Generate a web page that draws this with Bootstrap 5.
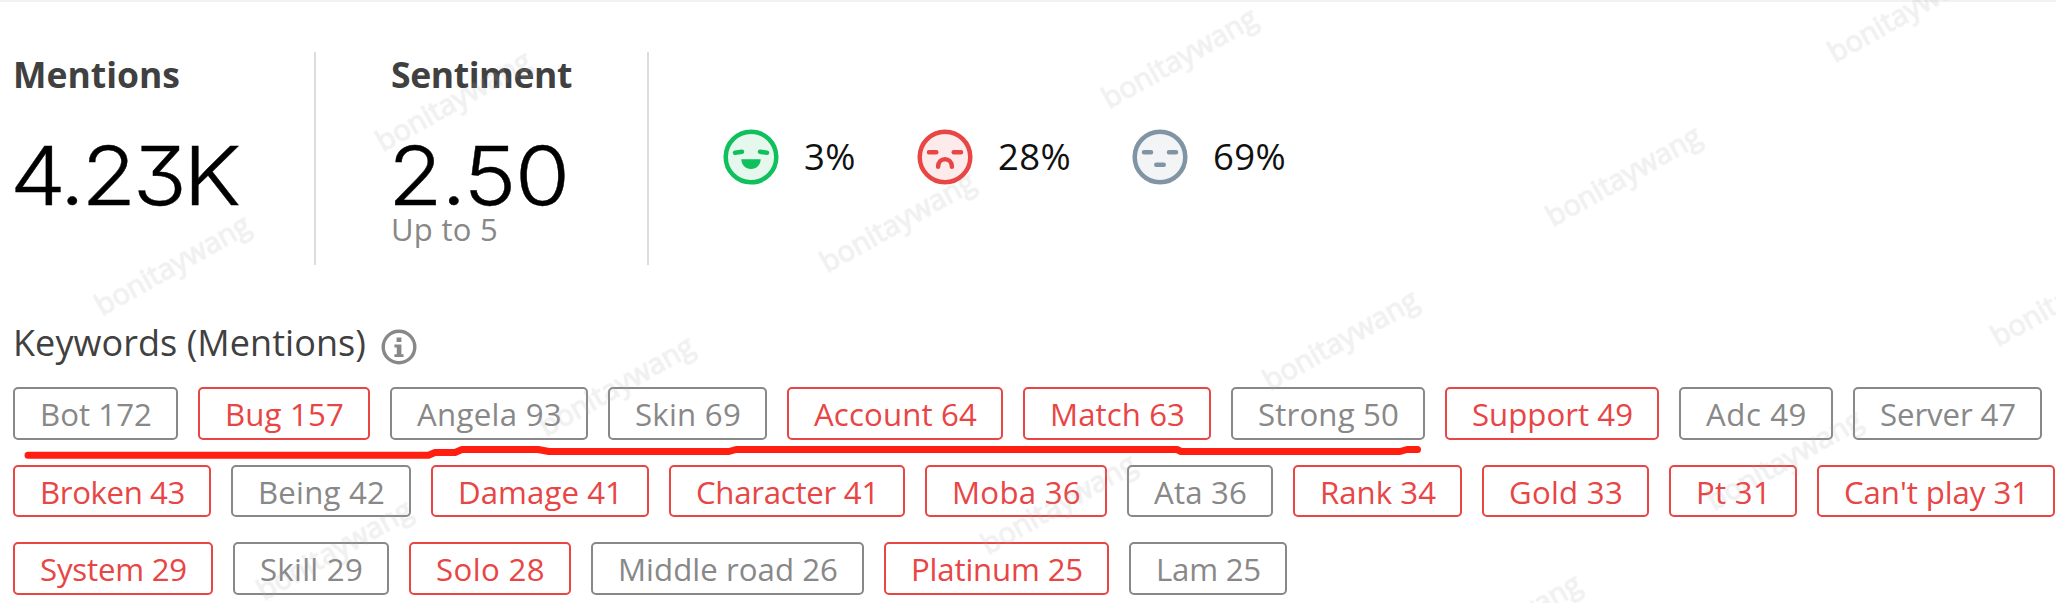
<!DOCTYPE html>
<html lang="en">
<head>
<meta charset="utf-8">
<title>Keyword mentions</title>
<link rel="stylesheet" href="https://cdn.jsdelivr.net/npm/bootstrap@5.3.0/dist/css/bootstrap.min.css">
<style>
body{font-family:"Open Sans","Noto Sans",sans-serif;color:#404040;background:#fff;height:603px;overflow:hidden;line-height:1}
.page{border-top:2px solid #f2f2f2;padding-left:13px;height:603px}
.stats{padding-top:50px;height:263px}
.stat{height:213px;border-right:2px solid #dcdcdc;color:#404040}
.stat-a{width:303px}
.stat-b{width:333px;padding-left:75px}
.stat h2{font-size:35.5px;line-height:44px;margin:0;font-weight:700;white-space:nowrap}
.num{font-family:Inter,Lato,sans-serif;font-weight:300;font-size:81px;line-height:80px;color:#000;white-space:nowrap;font-feature-settings:"cv09" 1;margin-top:40px;margin-left:-3px}
.num span{display:inline-block;transform:scaleX(1.1);transform-origin:0 50%;-webkit-text-stroke:.4px #000}
.upto{font-size:31px;line-height:36px;color:#888;margin-top:-5px;white-space:nowrap}
.faces{padding-left:74px;height:213px}
.face{width:56px;height:56px;flex:none}
.pct{font-size:36.5px;line-height:54px;color:#111;margin-left:25px;white-space:nowrap}
.mood{padding-top:77px}
.kw{font-size:36px;line-height:48px;white-space:nowrap;margin:0;font-weight:400}
.kwhead{height:48px;margin-top:54px}
.tags{margin-top:20px}
.tagrow{gap:20px;margin-bottom:25px;height:53px}
.tagrow:nth-child(2){height:52px}
.tag{border:2px solid #888;border-radius:5px;color:#888;font-size:31.2px;line-height:50px;height:100%;padding-left:25px;white-space:nowrap;flex:none}
.tag.neg{border-color:#e84545;color:#e84545}
.overlay{left:0;top:0;pointer-events:none}
.wm{opacity:.17}
.wm text{font-family:"Open Sans",sans-serif;font-size:29px;fill:#aaa;stroke:#aaa;stroke-width:1.2;text-anchor:middle}
</style>
</head>
<body>
<main class="page">
  <section class="stats d-flex">
    <div class="stat stat-a"><h2><span data-w="167">Mentions</span></h2>
      <div class="num"><span data-w="207">4.23K</span></div></div>
    <div class="stat stat-b"><h2><span data-w="181">Sentiment</span></h2>
      <div class="num"><span data-w="164">2.50</span></div>
      <div class="upto"><span data-w="107">Up to 5</span></div></div>
    <div class="faces d-flex">
      <div class="mood d-flex" style="width:194px">
        <svg class="face" viewBox="-28 -28 56 56"><circle r="25.3" fill="#e6f7ed" stroke="#0fc05c" stroke-width="4.5"/><path d="M-16-4.2L-9-5.2M9-5.2L16-4.2" stroke="#0fc05c" stroke-width="4.5" stroke-linecap="round"/><path d="M-9.7 2.3H9.7C9.5 8 5.5 12 0 12S-9.5 8-9.7 2.3Z" fill="#0fc05c"/></svg>
        <div class="pct"><span data-w="52">3%</span></div>
      </div>
      <div class="mood d-flex" style="width:215px">
        <svg class="face" viewBox="-28 -28 56 56"><circle r="25.3" fill="#fdebeb" stroke="#e84545" stroke-width="4.5"/><path d="M-16-4.7H-8.7M8.7-4.7H16M-6.9 9.7C-6.9-.4 6.9-.4 6.9 9.7" fill="none" stroke="#e84545" stroke-width="4.5" stroke-linecap="round"/></svg>
        <div class="pct"><span data-w="73">28%</span></div>
      </div>
      <div class="mood d-flex">
        <svg class="face" viewBox="-28 -28 56 56"><circle r="25.3" fill="#f2f4f6" stroke="#8094a3" stroke-width="4.5"/><path d="M-16-4.7H-9M9-4.7H16M-3.7 7.7H3.7" stroke="#8094a3" stroke-width="4.5" stroke-linecap="round"/></svg>
        <div class="pct"><span data-w="73">69%</span></div>
      </div>
    </div>
  </section>
  <div class="kwhead d-flex align-items-center">
    <h3 class="kw" style="width:368px"><span data-w="353">Keywords (Mentions)</span></h3>
    <svg width="36" height="36" viewBox="-18 -18 36 36" style="margin-top:7px"><circle r="15.8" fill="none" stroke="#888" stroke-width="3.4"/><path d="M-2.4-9.6H2.4V-5H-2.4ZM-4.6-2.4H2.4V7.2H4.6V10H-4.6V7.2H-2.2V.4H-4.6Z" fill="#888"/></svg>
  </div>
  <section class="tags" id="tags"></section>
</main>

<svg class="overlay position-absolute" width="2056" height="603">
  <path d="M28 455.3H428.5L435 452.5H455L462 449.5H538L549 451.5H729L736 449.5H1177L1181 451.5H1400L1407 449.5H1417.5" fill="none" stroke="#ff1e10" stroke-width="7" stroke-linecap="round" stroke-linejoin="round"/>
  <g class="wm" id="wm"></g>
</svg>

<script src="https://cdn.jsdelivr.net/npm/bootstrap@5.3.0/dist/js/bootstrap.bundle.min.js"></script>
<script>
// label, box width, 1 = negative keyword
const rows=[
 [["Bot 172",165,0],["Bug 157",172,1],["Angela 93",198,0],["Skin 69",159,0],["Account 64",216,1],["Match 63",188,1],["Strong 50",194,0],["Support 49",214,1],["Adc 49",154,0],["Server 47",189,0]],
 [["Broken 43",198,1],["Being 42",180,0],["Damage 41",218,1],["Character 41",236,1],["Moba 36",182,1],["Ata 36",146,0],["Rank 34",169,1],["Gold 33",167,1],["Pt 31",128,1],["Can't play 31",238,1]],
 [["System 29",200,1],["Skill 29",156,0],["Solo 28",162,1],["Middle road 26",273,0],["Platinum 25",225,1],["Lam 25",158,0]]];
document.getElementById("tags").innerHTML=rows.map(r=>'<div class="tagrow d-flex">'+r.map(([t,w,n])=>
 `<div class="tag${n?" neg":""}" style="width:${w}px"><span data-w="${w-53}">${t}</span></div>`).join("")+"</div>").join("");
// watermark lattice
const pts=[[1180,59],[898,223],[1624,177],[1341,341],[1906,13],[2069,297],[1059,505],[617,387],[454,102],[173,266],[335,551],[1785,461],[1504,625]];
document.getElementById("wm").innerHTML=pts.map(([x,y])=>`<text transform="translate(${x} ${y}) rotate(-29.5)" y="9" textLength="173">bonitaywang</text>`).join("");
// tighten each label to its column
function fit(){document.querySelectorAll("[data-w]").forEach(e=>{e.style.letterSpacing="0";
 const k=e.closest(".num")?1.1:1;
 const d=e.dataset.w-e.getBoundingClientRect().width/k;e.style.letterSpacing=d/e.textContent.length+"px";});}
fit();document.fonts.ready.then(fit);
</script>
</body>
</html>
